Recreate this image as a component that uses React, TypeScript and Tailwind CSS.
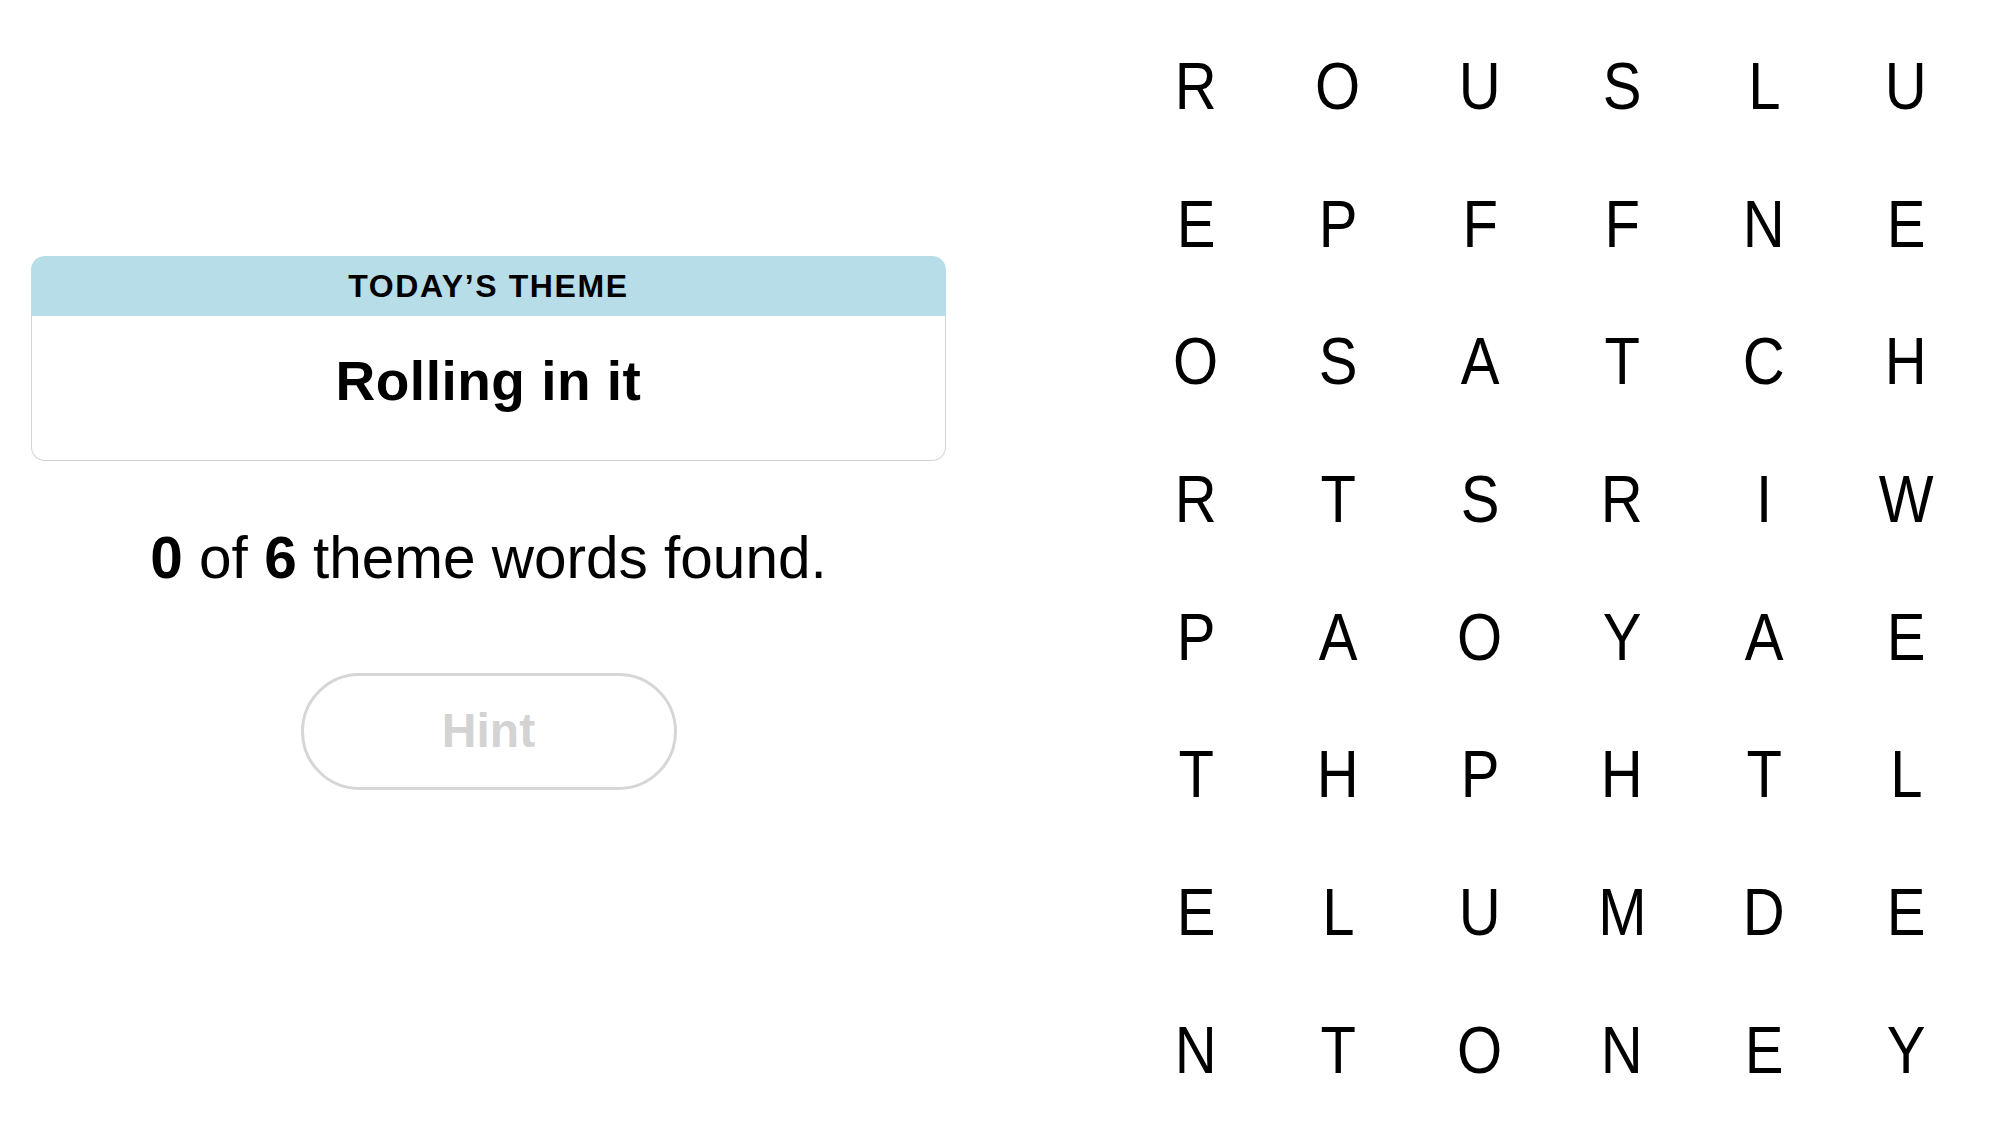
const GRID = [
  "ROUSLU",
  "EPFFNE",
  "OSATCH",
  "RTSRIW",
  "PAOYAE",
  "THPHTL",
  "ELUMDE",
  "NTONEY",
];

function ThemeCard() {
  return (
    <div className="w-full">
      <div className="h-[60px] rounded-t-[14px] bg-[#b7dde9] flex items-center justify-center">
        <span className="text-[32px] leading-none font-bold tracking-[0.05em] text-black">
          TODAY’S THEME
        </span>
      </div>
      <div className="h-[145px] rounded-b-[14px] border border-t-0 border-[#d3d3d3] flex justify-center pt-[38px]">
        <span className="text-[55px] leading-none font-bold tracking-[0.5px] text-black">
          Rolling in it
        </span>
      </div>
    </div>
  );
}

export default function App() {
  return (
    <div className="w-[1999px] h-[1140px] bg-white flex font-['Liberation_Sans',Arial,sans-serif] text-black">
      <div className="ml-[31px] w-[915px] flex flex-col items-center pt-[256px]">
        <ThemeCard />

        <p className="mt-[68px] text-[58.5px] leading-none">
          <span className="font-bold">0</span> of <span className="font-bold">6</span> theme words found.
        </p>

        <button className="mt-[85px] w-[376px] h-[117px] rounded-full border-[3px] border-[#d6d6d6] flex items-center justify-center">
          <span className="text-[48px] leading-none font-bold text-[#d3d3d3]">Hint</span>
        </button>
      </div>

      <div className="ml-[179px] pt-[17px] grid grid-cols-[repeat(6,142px)] auto-rows-[137.7px]">
        {GRID.map((row, r) =>
          row.split("").map((ch, c) => (
            <div key={`${r}-${c}`} className="flex items-center justify-center">
              <span className="text-[66px] leading-none scale-x-[0.88]">{ch}</span>
            </div>
          ))
        )}
      </div>
    </div>
  );
}
